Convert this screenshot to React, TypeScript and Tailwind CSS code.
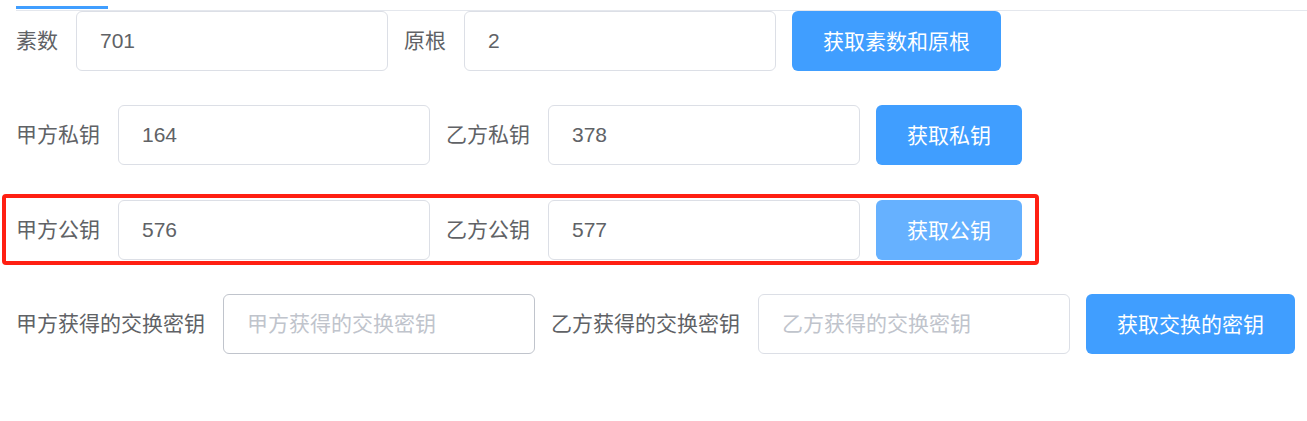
const font = "font-['Liberation_Sans','Noto_Sans_CJK_SC',sans-serif]";

function Field({
  label,
  value,
  placeholder,
  hover,
}: {
  label: string;
  value?: string;
  placeholder?: string;
  hover?: boolean;
}) {
  return (
    <div className="mr-[16px] flex items-center">
      <label className="pr-[18px] text-[21px] leading-[60px] text-[#606266]">{label}</label>
      <input
        readOnly
        value={value ?? ""}
        placeholder={placeholder}
        className={`h-[60px] w-[312px] rounded-[6px] border bg-white px-[23px] text-[21px] text-[#606266] outline-none placeholder:text-[#c0c4cc] ${
          hover ? "border-[#c0c4cc]" : "border-[#dcdfe6]"
        }`}
      />
    </div>
  );
}

function Btn({ children, hover }: { children: string; hover?: boolean }) {
  return (
    <button
      className={`h-[60px] rounded-[6px] px-[31px] text-[21px] leading-none text-white ${
        hover ? "bg-[#66b1ff]" : "bg-[#409eff]"
      }`}
    >
      {children}
    </button>
  );
}

export default function App() {
  return (
    <div className={`h-[421px] w-full bg-white ${font}`}>
      <div className="pl-4 pt-[6px]">
        <div className="h-[3px] w-[92px] bg-[#409eff]" />
        <div className="mt-[1px] h-[1px] bg-[#e4e7ed]" />
      </div>

      <div className="pl-4">
        <div className="flex h-[60px] items-center">
          <Field label="素数" value="701" />
          <Field label="原根" value="2" />
          <Btn>获取素数和原根</Btn>
        </div>

        <div className="mt-[34px] flex h-[60px] items-center">
          <Field label="甲方私钥" value="164" />
          <Field label="乙方私钥" value="378" />
          <Btn>获取私钥</Btn>
        </div>

        <div className="relative mt-[35px] flex h-[60px] w-fit items-center">
          <Field label="甲方公钥" value="576" />
          <Field label="乙方公钥" value="577" />
          <Btn hover>获取公钥</Btn>
          <div className="pointer-events-none absolute -top-[6px] -bottom-[5px] -left-[14px] -right-[17px] rounded-[4px] border-[4px] border-[#ff1f12]" />
        </div>

        <div className="mt-[34px] flex h-[60px] items-center">
          <Field label="甲方获得的交换密钥" placeholder="甲方获得的交换密钥" hover />
          <Field label="乙方获得的交换密钥" placeholder="乙方获得的交换密钥" />
          <Btn>获取交换的密钥</Btn>
        </div>
      </div>
    </div>
  );
}
